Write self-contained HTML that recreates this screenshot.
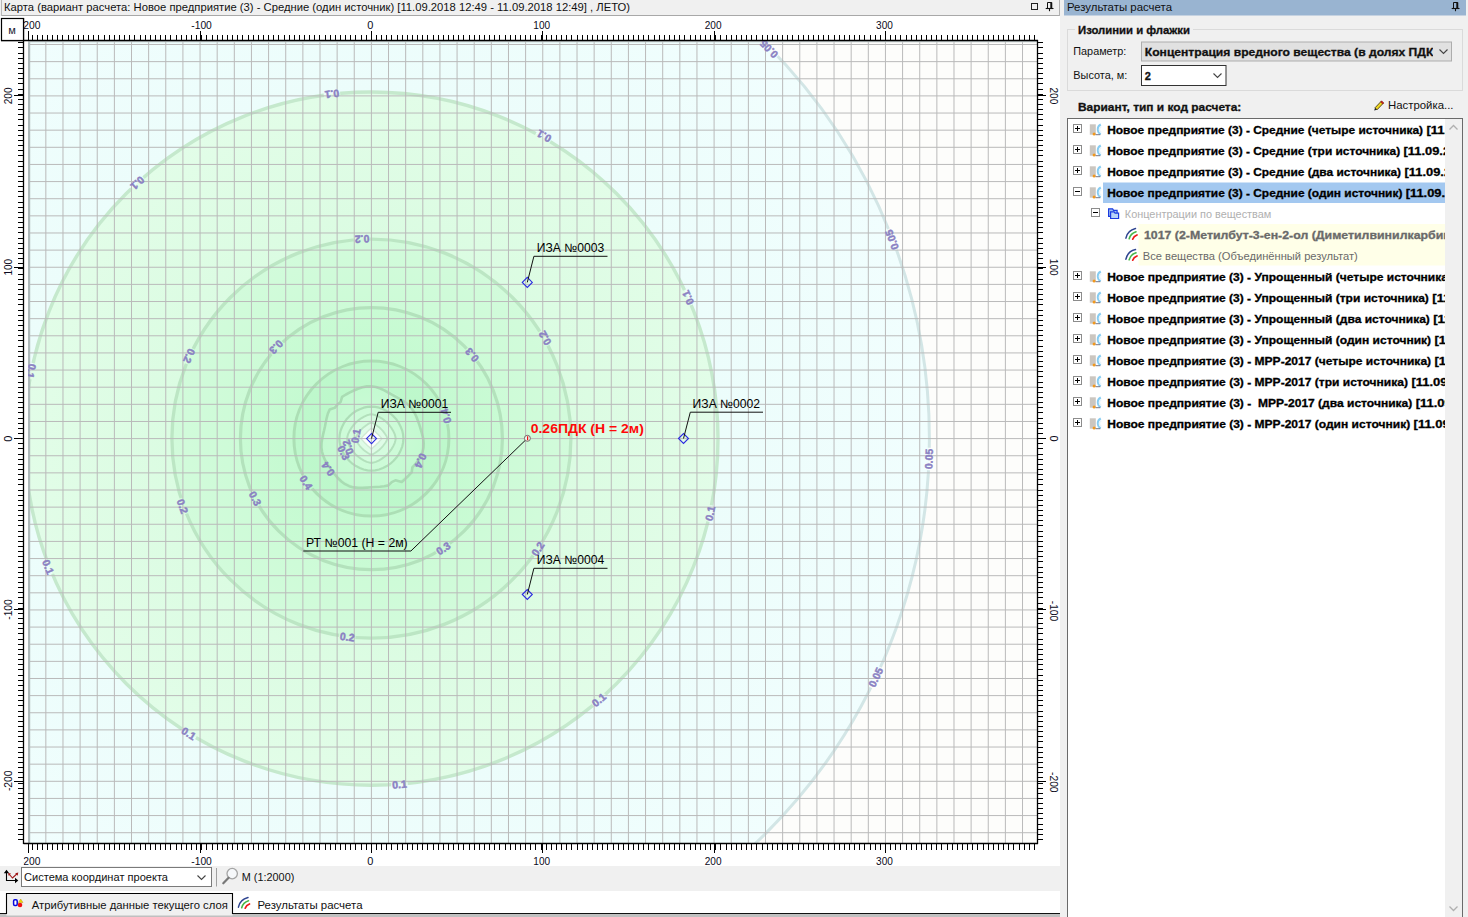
<!DOCTYPE html><html><head><meta charset="utf-8"><title>map</title><style>html,body{margin:0;padding:0;background:#f0f0f0;overflow:hidden}body{width:1468px;height:917px}</style></head><body><svg width="1468" height="917" viewBox="0 0 1468 917" font-family="Liberation Sans, sans-serif" font-size="11" style="display:block">
<defs>
<radialGradient id="g" gradientUnits="userSpaceOnUse" cx="371.4" cy="438.6" r="560"><stop offset="0.0000" stop-color="rgb(205,251,216)"/><stop offset="0.0571" stop-color="rgb(200,250,212)"/><stop offset="0.0893" stop-color="rgb(196,250,209)"/><stop offset="0.0911" stop-color="rgb(189,248,203)"/><stop offset="0.1393" stop-color="rgb(190,248,204)"/><stop offset="0.1393" stop-color="rgb(197,250,209)"/><stop offset="0.2339" stop-color="rgb(201,251,212)"/><stop offset="0.2339" stop-color="rgb(205,251,215)"/><stop offset="0.3563" stop-color="rgb(210,251,219)"/><stop offset="0.3563" stop-color="rgb(219,252,226)"/><stop offset="0.6189" stop-color="rgb(226,253,232)"/><stop offset="0.6189" stop-color="rgb(236,253,251)"/><stop offset="0.9964" stop-color="rgb(241,254,254)"/><stop offset="0.9964" stop-color="rgb(253,253,251)"/><stop offset="1.0000" stop-color="rgb(253,253,251)"/></radialGradient>
<clipPath id="mc"><rect x="28" y="41" width="1009.5" height="802.5"/></clipPath>
<clipPath id="tc"><rect x="1068" y="119" width="377" height="798"/></clipPath>
<clipPath id="cc"><rect x="1142" y="42" width="291" height="19"/></clipPath>
<clipPath id="rc"><rect x="23.5" y="17" width="1030" height="850"/></clipPath>
</defs>
<rect width="1468" height="917" fill="#f0f0f0"/>
<rect x="0" y="0" width="1060" height="16" fill="#f0f0f0"/>
<rect x="1" y="15" width="1058" height="1" fill="#a8a8a8"/>
<rect x="1" y="0" width="1" height="16" fill="#b8b8b8"/><rect x="1059" y="0" width="1" height="16" fill="#b0b0b0"/>
<text x="4" y="10.8" font-size="11" fill="#111" textLength="626" lengthAdjust="spacingAndGlyphs">Карта (вариант расчета: Новое предприятие (3) - Средние (один источник) [11.09.2018 12:49 - 11.09.2018 12:49] , ЛЕТО)</text>
<rect x="1031.5" y="3.5" width="6" height="6" fill="none" stroke="#222" stroke-width="1"/>
<g stroke="#111" fill="none"><path d="M1047.5 2.5H1051.7V8.5H1047.5Z" stroke-width="1"/><path d="M1051.2 2.5V8.5" stroke-width="1.8"/><path d="M1045.7 8.5H1053.5" stroke-width="1.1"/><path d="M1049.5 8.5V11.2" stroke-width="1.1"/></g>
<rect x="0" y="16" width="1060" height="850" fill="#fff"/>
<g clip-path="url(#mc)">
<rect x="28" y="41" width="1010" height="803" fill="#fdfdfb"/>
<circle cx="371.4" cy="438.6" r="560" fill="url(#g)"/>
<mask id="lm" maskUnits="userSpaceOnUse" x="0" y="0" width="1468" height="917"><rect x="0" y="0" width="1468" height="917" fill="#fff"/><rect x="39.8" y="562" width="16.5" height="10" fill="#000" transform="rotate(68.3 48 567)"/><rect x="180.4" y="728.6" width="16.5" height="10" fill="#000" transform="rotate(31.8 188.7 733.6)"/><rect x="391.2" y="779.5" width="16.5" height="10" fill="#000" transform="rotate(-4.6 399.5 784.5)"/><rect x="590.8" y="695" width="16.5" height="10" fill="#000" transform="rotate(-41.0 599 700)"/><rect x="702.0" y="508.5" width="16.5" height="10" fill="#000" transform="rotate(-77.5 710.3 513.5)"/><rect x="679.8" y="292.5" width="16.5" height="10" fill="#000" transform="rotate(-114.0 688 297.5)"/><rect x="535.8" y="131" width="16.5" height="10" fill="#000" transform="rotate(-150.3 544 136)"/><rect x="323.8" y="89" width="16.5" height="10" fill="#000" transform="rotate(-186.5 332 94)"/><rect x="129.2" y="178" width="16.5" height="10" fill="#000" transform="rotate(-222.5 137.4 183)"/><rect x="22.8" y="366" width="16.5" height="10" fill="#000" transform="rotate(-258.8 31 371)"/><rect x="174.1" y="501.4" width="16.5" height="10" fill="#000" transform="rotate(70.3 182.3 506.4)"/><rect x="338.9" y="632" width="16.5" height="10" fill="#000" transform="rotate(7.0 347.2 637)"/><rect x="529.8" y="544" width="16.5" height="10" fill="#000" transform="rotate(-56.5 538 549)"/><rect x="536.8" y="333" width="16.5" height="10" fill="#000" transform="rotate(-120.1 545 338)"/><rect x="353.8" y="234" width="16.5" height="10" fill="#000" transform="rotate(-182.7 362 239)"/><rect x="180.8" y="351" width="16.5" height="10" fill="#000" transform="rotate(-245.6 189 356)"/><rect x="246.8" y="493.6" width="16.5" height="10" fill="#000" transform="rotate(62.7 255 498.6)"/><rect x="435.1" y="543.6" width="16.5" height="10" fill="#000" transform="rotate(-33.2 443.4 548.6)"/><rect x="463.8" y="350" width="16.5" height="10" fill="#000" transform="rotate(-129.7 472 355)"/><rect x="267.8" y="342" width="16.5" height="10" fill="#000" transform="rotate(-226.2 276 347)"/><rect x="297.8" y="477.6" width="16.5" height="10" fill="#000" transform="rotate(56.1 306 482.6)"/><rect x="437.8" y="411" width="16.5" height="10" fill="#000" transform="rotate(-106.9 446 416)"/><rect x="917.8" y="454" width="22.5" height="10" fill="#000" transform="rotate(-87.9 929 459)"/><rect x="880.8" y="234.7" width="22.5" height="10" fill="#000" transform="rotate(-110.9 892 239.7)"/><rect x="864.5" y="672.3" width="22.5" height="10" fill="#000" transform="rotate(-64.7 875.8 677.3)"/><rect x="757.8" y="44" width="22.5" height="10" fill="#000" transform="rotate(-134.4 769 49)"/></mask>
<g mask="url(#lm)">
<circle cx="371.4" cy="438.6" r="558" fill="none" stroke="#d3e6e6" stroke-width="3"/>
<circle cx="371.4" cy="438.6" r="346.6" fill="none" stroke="#c5e9cd" stroke-width="3.4"/>
<circle cx="371.4" cy="438.6" r="199.5" fill="none" stroke="#bce6c4" stroke-width="3.3"/>
<circle cx="371.4" cy="438.6" r="131" fill="none" stroke="#b3e2bc" stroke-width="3.2"/>
<circle cx="371.4" cy="438.6" r="77.5" fill="none" stroke="#acdfb5" stroke-width="3.0"/>
</g>
<path d="M423.2 438.6 L423.7 443.2 L423.5 447.8 L422.5 452.3 L420.7 456.5 L418.3 460.4 L415.4 464.0 L412.4 467.3 L411.7 472.4 L408.5 475.7 L405.2 478.9 L401.7 481.9 L395.5 480.3 L391.7 482.2 L388.4 485.4 L384.2 486.2 L379.9 486.7 L375.6 487.0 L371.4 487.3 L367.1 487.6 L362.7 487.9 L358.2 487.9 L353.6 487.4 L349.2 486.2 L345.1 484.2 L341.4 481.5 L338.1 478.3 L335.2 474.8 L332.4 471.3 L329.9 467.7 L327.4 464.0 L325.1 460.2 L323.3 456.1 L322.0 451.8 L321.4 447.4 L321.5 443.0 L322.2 438.6 L323.1 434.4 L324.1 430.3 L325.0 426.2 L325.8 422.0 L326.7 417.8 L327.9 413.5 L329.7 409.4 L334.7 407.8 L337.4 404.6 L340.6 401.9 L342.1 396.8 L346.0 394.5 L349.9 392.4 L353.9 390.5 L358.0 388.7 L362.3 387.2 L366.8 386.4 L371.4 386.3 L375.9 387.0 L380.2 388.5 L384.3 390.4 L388.2 392.5 L391.9 394.6 L395.6 396.7 L399.3 398.7 L403.0 400.9 L406.6 403.4 L409.8 406.4 L412.6 409.8 L414.9 413.5 L416.7 417.5 L418.2 421.6 L419.6 425.7 L420.9 429.9 L422.1 434.2Z" fill="none" stroke="#a9dcb3" stroke-width="2.6" stroke-linejoin="round"/>
<path d="M403.4 438.6 L403.1 442.4 L402.3 446.3 L400.8 450.2 L398.9 454.0 L396.5 457.6 L393.6 460.8 L390.4 463.7 L386.8 466.1 L383.0 468.0 L379.1 469.5 L375.2 470.3 L371.4 470.6 L367.6 470.3 L363.7 469.5 L359.8 468.0 L356.0 466.1 L352.4 463.7 L349.2 460.8 L346.3 457.6 L343.9 454.0 L342.0 450.2 L340.5 446.3 L339.7 442.4 L339.4 438.6 L339.7 434.8 L340.5 430.9 L342.0 427.0 L343.9 423.2 L346.3 419.6 L349.2 416.4 L352.4 413.5 L356.0 411.1 L359.8 409.2 L363.7 407.7 L367.6 406.9 L371.4 406.6 L375.2 406.9 L379.1 407.7 L383.0 409.2 L386.8 411.1 L390.4 413.5 L393.6 416.4 L396.5 419.6 L398.9 423.2 L400.8 427.0 L402.3 430.9 L403.1 434.8Z" fill="rgb(205,251,216)" stroke="#addeb7" stroke-width="2.2" stroke-linejoin="round"/>
<path d="M395.7 438.6 L395.4 440.5 L394.7 443.1 L393.4 445.9 L391.7 448.8 L389.6 451.7 L387.2 454.4 L384.5 456.8 L381.6 458.9 L378.7 460.6 L375.9 461.9 L373.3 462.6 L371.4 462.9 L369.5 462.6 L366.9 461.9 L364.1 460.6 L361.2 458.9 L358.3 456.8 L355.6 454.4 L353.2 451.7 L351.1 448.8 L349.4 445.9 L348.1 443.1 L347.4 440.5 L347.1 438.6 L347.4 436.7 L348.1 434.1 L349.4 431.3 L351.1 428.4 L353.2 425.5 L355.6 422.8 L358.3 420.4 L361.2 418.3 L364.1 416.6 L366.9 415.3 L369.5 414.6 L371.4 414.3 L373.3 414.6 L375.9 415.3 L378.7 416.6 L381.6 418.3 L384.5 420.4 L387.2 422.8 L389.6 425.5 L391.7 428.4 L393.4 431.3 L394.7 434.1 L395.4 436.7Z" fill="rgb(212,252,222)" stroke="#b3e0bc" stroke-width="2.0" stroke-linejoin="round"/>
<path d="M387.4 438.6 L387.2 439.4 L386.6 440.8 L385.6 442.5 L384.3 444.3 L382.8 446.3 L381.0 448.2 L379.1 450.0 L377.1 451.5 L375.3 452.8 L373.6 453.8 L372.2 454.4 L371.4 454.6 L370.6 454.4 L369.2 453.8 L367.5 452.8 L365.7 451.5 L363.7 450.0 L361.8 448.2 L360.0 446.3 L358.5 444.3 L357.2 442.5 L356.2 440.8 L355.6 439.4 L355.4 438.6 L355.6 437.8 L356.2 436.4 L357.2 434.7 L358.5 432.9 L360.0 430.9 L361.8 429.0 L363.7 427.2 L365.7 425.7 L367.5 424.4 L369.2 423.4 L370.6 422.8 L371.4 422.6 L372.2 422.8 L373.6 423.4 L375.3 424.4 L377.1 425.7 L379.1 427.2 L381.0 429.0 L382.8 430.9 L384.3 432.9 L385.6 434.7 L386.6 436.4 L387.2 437.8Z" fill="rgb(223,252,231)" stroke="#bbe3c3" stroke-width="1.8" stroke-linejoin="round"/>
<path d="M381.9 438.6 L381.7 438.8 L381.2 439.4 L380.4 440.3 L379.4 441.4 L378.2 442.7 L376.8 444.0 L375.5 445.4 L374.2 446.6 L373.1 447.6 L372.2 448.4 L371.6 448.9 L371.4 449.1 L371.2 448.9 L370.6 448.4 L369.7 447.6 L368.6 446.6 L367.3 445.4 L366.0 444.0 L364.6 442.7 L363.4 441.4 L362.4 440.3 L361.6 439.4 L361.1 438.8 L360.9 438.6 L361.1 438.4 L361.6 437.8 L362.4 436.9 L363.4 435.8 L364.6 434.5 L366.0 433.2 L367.3 431.8 L368.6 430.6 L369.7 429.6 L370.6 428.8 L371.2 428.3 L371.4 428.1 L371.6 428.3 L372.2 428.8 L373.1 429.6 L374.2 430.6 L375.5 431.8 L376.8 433.2 L378.2 434.5 L379.4 435.8 L380.4 436.9 L381.2 437.8 L381.7 438.4Z" fill="rgb(250,254,251)" stroke="#cfe9d4" stroke-width="1.4" stroke-linejoin="round"/>
<path d="M45.83 41V844M62.97 41V844M80.10 41V844M97.24 41V844M114.38 41V844M131.51 41V844M148.64 41V844M165.78 41V844M182.91 41V844M200.05 41V844M217.18 41V844M234.32 41V844M251.45 41V844M268.59 41V844M285.72 41V844M302.86 41V844M320.00 41V844M337.13 41V844M354.26 41V844M371.40 41V844M388.53 41V844M405.67 41V844M422.80 41V844M439.94 41V844M457.07 41V844M474.21 41V844M491.34 41V844M508.48 41V844M525.62 41V844M542.75 41V844M559.88 41V844M577.02 41V844M594.15 41V844M611.29 41V844M628.42 41V844M645.56 41V844M662.69 41V844M679.83 41V844M696.96 41V844M714.10 41V844M731.23 41V844M748.37 41V844M765.50 41V844M782.64 41V844M799.77 41V844M816.91 41V844M834.04 41V844M851.18 41V844M868.32 41V844M885.45 41V844M902.59 41V844M919.72 41V844M936.86 41V844M953.99 41V844M971.12 41V844M988.26 41V844M1005.39 41V844M1022.53 41V844M28 832.71H1038M28 815.57H1038M28 798.43H1038M28 781.30H1038M28 764.16H1038M28 747.03H1038M28 729.89H1038M28 712.76H1038M28 695.62H1038M28 678.49H1038M28 661.36H1038M28 644.22H1038M28 627.09H1038M28 609.95H1038M28 592.82H1038M28 575.68H1038M28 558.55H1038M28 541.41H1038M28 524.27H1038M28 507.14H1038M28 490.00H1038M28 472.87H1038M28 455.74H1038M28 438.60H1038M28 421.47H1038M28 404.33H1038M28 387.20H1038M28 370.06H1038M28 352.93H1038M28 335.79H1038M28 318.66H1038M28 301.52H1038M28 284.38H1038M28 267.25H1038M28 250.12H1038M28 232.98H1038M28 215.85H1038M28 198.71H1038M28 181.58H1038M28 164.44H1038M28 147.31H1038M28 130.17H1038M28 113.04H1038M28 95.90H1038M28 78.77H1038M28 61.63H1038M28 44.50H1038" stroke="#bababa" stroke-width="1" fill="none"/>
<rect x="28" y="41" width="2.2" height="803" fill="#aeb9ba"/>
<rect x="28" y="41" width="1010" height="1.3" fill="#c6cfcf"/>
<text x="48" y="570.6" font-size="10.5" font-weight="bold" fill="#8a81c3" stroke="#8a81c3" stroke-width="0.45" text-anchor="middle" transform="rotate(68.3 48 567)">0.1</text>
<text x="188.7" y="737.2" font-size="10.5" font-weight="bold" fill="#8a81c3" stroke="#8a81c3" stroke-width="0.45" text-anchor="middle" transform="rotate(31.8 188.7 733.6)">0.1</text>
<text x="399.5" y="788.1" font-size="10.5" font-weight="bold" fill="#8a81c3" stroke="#8a81c3" stroke-width="0.45" text-anchor="middle" transform="rotate(-4.6 399.5 784.5)">0.1</text>
<text x="599" y="703.6" font-size="10.5" font-weight="bold" fill="#8a81c3" stroke="#8a81c3" stroke-width="0.45" text-anchor="middle" transform="rotate(-41.0 599 700)">0.1</text>
<text x="710.3" y="517.1" font-size="10.5" font-weight="bold" fill="#8a81c3" stroke="#8a81c3" stroke-width="0.45" text-anchor="middle" transform="rotate(-77.5 710.3 513.5)">0.1</text>
<text x="688" y="301.1" font-size="10.5" font-weight="bold" fill="#8a81c3" stroke="#8a81c3" stroke-width="0.45" text-anchor="middle" transform="rotate(-114.0 688 297.5)">0.1</text>
<text x="544" y="139.6" font-size="10.5" font-weight="bold" fill="#8a81c3" stroke="#8a81c3" stroke-width="0.45" text-anchor="middle" transform="rotate(-150.3 544 136)">0.1</text>
<text x="332" y="97.6" font-size="10.5" font-weight="bold" fill="#8a81c3" stroke="#8a81c3" stroke-width="0.45" text-anchor="middle" transform="rotate(-186.5 332 94)">0.1</text>
<text x="137.4" y="186.6" font-size="10.5" font-weight="bold" fill="#8a81c3" stroke="#8a81c3" stroke-width="0.45" text-anchor="middle" transform="rotate(-222.5 137.4 183)">0.1</text>
<text x="31" y="374.6" font-size="10.5" font-weight="bold" fill="#8a81c3" stroke="#8a81c3" stroke-width="0.45" text-anchor="middle" transform="rotate(-258.8 31 371)">0.1</text>
<text x="182.3" y="510.0" font-size="10.5" font-weight="bold" fill="#8a81c3" stroke="#8a81c3" stroke-width="0.45" text-anchor="middle" transform="rotate(70.3 182.3 506.4)">0.2</text>
<text x="347.2" y="640.6" font-size="10.5" font-weight="bold" fill="#8a81c3" stroke="#8a81c3" stroke-width="0.45" text-anchor="middle" transform="rotate(7.0 347.2 637)">0.2</text>
<text x="538" y="552.6" font-size="10.5" font-weight="bold" fill="#8a81c3" stroke="#8a81c3" stroke-width="0.45" text-anchor="middle" transform="rotate(-56.5 538 549)">0.2</text>
<text x="545" y="341.6" font-size="10.5" font-weight="bold" fill="#8a81c3" stroke="#8a81c3" stroke-width="0.45" text-anchor="middle" transform="rotate(-120.1 545 338)">0.2</text>
<text x="362" y="242.6" font-size="10.5" font-weight="bold" fill="#8a81c3" stroke="#8a81c3" stroke-width="0.45" text-anchor="middle" transform="rotate(-182.7 362 239)">0.2</text>
<text x="189" y="359.6" font-size="10.5" font-weight="bold" fill="#8a81c3" stroke="#8a81c3" stroke-width="0.45" text-anchor="middle" transform="rotate(-245.6 189 356)">0.2</text>
<text x="255" y="502.20000000000005" font-size="10.5" font-weight="bold" fill="#8a81c3" stroke="#8a81c3" stroke-width="0.45" text-anchor="middle" transform="rotate(62.7 255 498.6)">0.3</text>
<text x="443.4" y="552.2" font-size="10.5" font-weight="bold" fill="#8a81c3" stroke="#8a81c3" stroke-width="0.45" text-anchor="middle" transform="rotate(-33.2 443.4 548.6)">0.3</text>
<text x="472" y="358.6" font-size="10.5" font-weight="bold" fill="#8a81c3" stroke="#8a81c3" stroke-width="0.45" text-anchor="middle" transform="rotate(-129.7 472 355)">0.3</text>
<text x="276" y="350.6" font-size="10.5" font-weight="bold" fill="#8a81c3" stroke="#8a81c3" stroke-width="0.45" text-anchor="middle" transform="rotate(-226.2 276 347)">0.3</text>
<text x="306" y="486.20000000000005" font-size="10.5" font-weight="bold" fill="#8a81c3" stroke="#8a81c3" stroke-width="0.45" text-anchor="middle" transform="rotate(56.1 306 482.6)">0.4</text>
<text x="446" y="419.6" font-size="10.5" font-weight="bold" fill="#8a81c3" stroke="#8a81c3" stroke-width="0.45" text-anchor="middle" transform="rotate(-106.9 446 416)">0.4</text>
<text x="929" y="462.6" font-size="10.5" font-weight="bold" fill="#8a81c3" stroke="#8a81c3" stroke-width="0.45" text-anchor="middle" transform="rotate(-87.9 929 459)">0.05</text>
<text x="892" y="243.29999999999998" font-size="10.5" font-weight="bold" fill="#8a81c3" stroke="#8a81c3" stroke-width="0.45" text-anchor="middle" transform="rotate(-110.9 892 239.7)">0.05</text>
<text x="875.8" y="680.9" font-size="10.5" font-weight="bold" fill="#8a81c3" stroke="#8a81c3" stroke-width="0.45" text-anchor="middle" transform="rotate(-64.7 875.8 677.3)">0.05</text>
<text x="769" y="52.6" font-size="10.5" font-weight="bold" fill="#8a81c3" stroke="#8a81c3" stroke-width="0.45" text-anchor="middle" transform="rotate(-134.4 769 49)">0.05</text>
<text x="328" y="472.5" font-size="10.5" font-weight="bold" fill="#8a81c3" stroke="#8a81c3" stroke-width="0.45" text-anchor="middle" transform="rotate(235.1 328 468.9)">0.4</text>
<text x="420.5" y="464.20000000000005" font-size="10.5" font-weight="bold" fill="#8a81c3" stroke="#8a81c3" stroke-width="0.45" text-anchor="middle" transform="rotate(114.1 420.5 460.6)">0.4</text>
<text x="343.6" y="456.40000000000003" font-size="10.5" font-weight="bold" fill="#8a81c3" stroke="#8a81c3" stroke-width="0.45" text-anchor="middle" transform="rotate(62.9 343.6 452.8)">0.3</text>
<text x="348" y="450.6" font-size="10.5" font-weight="bold" fill="#8a81c3" stroke="#8a81c3" stroke-width="0.45" text-anchor="middle" transform="rotate(250.3 348 447)">0.2</text>
<text x="356" y="439.6" font-size="10.5" font-weight="bold" fill="#8a81c3" stroke="#8a81c3" stroke-width="0.45" text-anchor="middle" transform="rotate(-80.4 356 436)">0.1</text>
</g>
<path d="M366.5 438.6L371.5 433.6L376.5 438.6L371.5 443.6Z" fill="none" stroke="#2a2ae0" stroke-width="1.1"/>
<path d="M371.5 438.6L378.2 412.3H451" fill="none" stroke="#111" stroke-width="1"/>
<text x="380.7" y="407.7" font-size="12" fill="#000" textLength="67.5" lengthAdjust="spacingAndGlyphs">ИЗА №0001</text>
<path d="M522.3 282.4L527.3 277.4L532.3 282.4L527.3 287.4Z" fill="none" stroke="#2a2ae0" stroke-width="1.1"/>
<path d="M527.3 282.4L533.9 256.3H607.5" fill="none" stroke="#111" stroke-width="1"/>
<text x="536.7" y="251.70000000000002" font-size="12" fill="#000" textLength="67.5" lengthAdjust="spacingAndGlyphs">ИЗА №0003</text>
<path d="M678.5 438.5L683.5 433.5L688.5 438.5L683.5 443.5Z" fill="none" stroke="#2a2ae0" stroke-width="1.1"/>
<path d="M683.5 438.5L690.3 412.2H763" fill="none" stroke="#111" stroke-width="1"/>
<text x="692.6" y="407.59999999999997" font-size="12" fill="#000" textLength="67.5" lengthAdjust="spacingAndGlyphs">ИЗА №0002</text>
<path d="M522.3 594.5L527.3 589.5L532.3 594.5L527.3 599.5Z" fill="none" stroke="#2a2ae0" stroke-width="1.1"/>
<path d="M527.3 594.5L533.9 568.3H607.5" fill="none" stroke="#111" stroke-width="1"/>
<text x="536.7" y="563.6999999999999" font-size="12" fill="#000" textLength="67.5" lengthAdjust="spacingAndGlyphs">ИЗА №0004</text>
<path d="M303.3 551H410.9L527.3 438.4" fill="none" stroke="#111" stroke-width="1"/>
<circle cx="527.4" cy="438.3" r="3" fill="#eef6ee" stroke="#6a5a5a" stroke-width="0.9"/><path d="M527.6 436.3V440.3" stroke="#f01010" stroke-width="1.2"/>
<text x="306" y="547.4" font-size="12" fill="#000" textLength="101.7" lengthAdjust="spacingAndGlyphs">РТ №001 (H = 2м)</text>
<text x="530.7" y="432.6" font-size="13.5" font-weight="bold" fill="#ff0808" textLength="113.2" lengthAdjust="spacingAndGlyphs">0.26ПДК (H = 2м)</text>
<path d="M32.5 35V40.5M32.5 843.5V849.5M37.5 35V40.5M37.5 843.5V849.5M42.5 35V40.5M42.5 843.5V849.5M47.5 35V40.5M47.5 843.5V849.5M52.5 35V40.5M52.5 843.5V849.5M57.5 35V40.5M57.5 843.5V849.5M62.5 35V40.5M62.5 843.5V849.5M68.5 35V40.5M68.5 843.5V849.5M73.5 35V40.5M73.5 843.5V849.5M78.5 35V40.5M78.5 843.5V849.5M83.5 35V40.5M83.5 843.5V849.5M88.5 35V40.5M88.5 843.5V849.5M93.5 35V40.5M93.5 843.5V849.5M98.5 35V40.5M98.5 843.5V849.5M104.5 35V40.5M104.5 843.5V849.5M109.5 35V40.5M109.5 843.5V849.5M114.5 35V40.5M114.5 843.5V849.5M119.5 35V40.5M119.5 843.5V849.5M124.5 35V40.5M124.5 843.5V849.5M129.5 35V40.5M129.5 843.5V849.5M134.5 35V40.5M134.5 843.5V849.5M140.5 35V40.5M140.5 843.5V849.5M145.5 35V40.5M145.5 843.5V849.5M150.5 35V40.5M150.5 843.5V849.5M155.5 35V40.5M155.5 843.5V849.5M160.5 35V40.5M160.5 843.5V849.5M165.5 35V40.5M165.5 843.5V849.5M170.5 35V40.5M170.5 843.5V849.5M176.5 35V40.5M176.5 843.5V849.5M181.5 35V40.5M181.5 843.5V849.5M186.5 35V40.5M186.5 843.5V849.5M191.5 35V40.5M191.5 843.5V849.5M196.5 35V40.5M196.5 843.5V849.5M201.5 35V40.5M201.5 843.5V849.5M206.5 35V40.5M206.5 843.5V849.5M212.5 35V40.5M212.5 843.5V849.5M217.5 35V40.5M217.5 843.5V849.5M222.5 35V40.5M222.5 843.5V849.5M227.5 35V40.5M227.5 843.5V849.5M232.5 35V40.5M232.5 843.5V849.5M237.5 35V40.5M237.5 843.5V849.5M242.5 35V40.5M242.5 843.5V849.5M248.5 35V40.5M248.5 843.5V849.5M253.5 35V40.5M253.5 843.5V849.5M258.5 35V40.5M258.5 843.5V849.5M263.5 35V40.5M263.5 843.5V849.5M268.5 35V40.5M268.5 843.5V849.5M273.5 35V40.5M273.5 843.5V849.5M278.5 35V40.5M278.5 843.5V849.5M284.5 35V40.5M284.5 843.5V849.5M289.5 35V40.5M289.5 843.5V849.5M294.5 35V40.5M294.5 843.5V849.5M299.5 35V40.5M299.5 843.5V849.5M304.5 35V40.5M304.5 843.5V849.5M309.5 35V40.5M309.5 843.5V849.5M314.5 35V40.5M314.5 843.5V849.5M319.5 35V40.5M319.5 843.5V849.5M325.5 35V40.5M325.5 843.5V849.5M330.5 35V40.5M330.5 843.5V849.5M335.5 35V40.5M335.5 843.5V849.5M340.5 35V40.5M340.5 843.5V849.5M345.5 35V40.5M345.5 843.5V849.5M350.5 35V40.5M350.5 843.5V849.5M355.5 35V40.5M355.5 843.5V849.5M361.5 35V40.5M361.5 843.5V849.5M366.5 35V40.5M366.5 843.5V849.5M371.5 35V40.5M371.5 843.5V849.5M376.5 35V40.5M376.5 843.5V849.5M381.5 35V40.5M381.5 843.5V849.5M386.5 35V40.5M386.5 843.5V849.5M391.5 35V40.5M391.5 843.5V849.5M397.5 35V40.5M397.5 843.5V849.5M402.5 35V40.5M402.5 843.5V849.5M407.5 35V40.5M407.5 843.5V849.5M412.5 35V40.5M412.5 843.5V849.5M417.5 35V40.5M417.5 843.5V849.5M422.5 35V40.5M422.5 843.5V849.5M427.5 35V40.5M427.5 843.5V849.5M433.5 35V40.5M433.5 843.5V849.5M438.5 35V40.5M438.5 843.5V849.5M443.5 35V40.5M443.5 843.5V849.5M448.5 35V40.5M448.5 843.5V849.5M453.5 35V40.5M453.5 843.5V849.5M458.5 35V40.5M458.5 843.5V849.5M463.5 35V40.5M463.5 843.5V849.5M469.5 35V40.5M469.5 843.5V849.5M474.5 35V40.5M474.5 843.5V849.5M479.5 35V40.5M479.5 843.5V849.5M484.5 35V40.5M484.5 843.5V849.5M489.5 35V40.5M489.5 843.5V849.5M494.5 35V40.5M494.5 843.5V849.5M499.5 35V40.5M499.5 843.5V849.5M505.5 35V40.5M505.5 843.5V849.5M510.5 35V40.5M510.5 843.5V849.5M515.5 35V40.5M515.5 843.5V849.5M520.5 35V40.5M520.5 843.5V849.5M525.5 35V40.5M525.5 843.5V849.5M530.5 35V40.5M530.5 843.5V849.5M535.5 35V40.5M535.5 843.5V849.5M541.5 35V40.5M541.5 843.5V849.5M546.5 35V40.5M546.5 843.5V849.5M551.5 35V40.5M551.5 843.5V849.5M556.5 35V40.5M556.5 843.5V849.5M561.5 35V40.5M561.5 843.5V849.5M566.5 35V40.5M566.5 843.5V849.5M571.5 35V40.5M571.5 843.5V849.5M577.5 35V40.5M577.5 843.5V849.5M582.5 35V40.5M582.5 843.5V849.5M587.5 35V40.5M587.5 843.5V849.5M592.5 35V40.5M592.5 843.5V849.5M597.5 35V40.5M597.5 843.5V849.5M602.5 35V40.5M602.5 843.5V849.5M607.5 35V40.5M607.5 843.5V849.5M613.5 35V40.5M613.5 843.5V849.5M618.5 35V40.5M618.5 843.5V849.5M623.5 35V40.5M623.5 843.5V849.5M628.5 35V40.5M628.5 843.5V849.5M633.5 35V40.5M633.5 843.5V849.5M638.5 35V40.5M638.5 843.5V849.5M643.5 35V40.5M643.5 843.5V849.5M648.5 35V40.5M648.5 843.5V849.5M654.5 35V40.5M654.5 843.5V849.5M659.5 35V40.5M659.5 843.5V849.5M664.5 35V40.5M664.5 843.5V849.5M669.5 35V40.5M669.5 843.5V849.5M674.5 35V40.5M674.5 843.5V849.5M679.5 35V40.5M679.5 843.5V849.5M684.5 35V40.5M684.5 843.5V849.5M690.5 35V40.5M690.5 843.5V849.5M695.5 35V40.5M695.5 843.5V849.5M700.5 35V40.5M700.5 843.5V849.5M705.5 35V40.5M705.5 843.5V849.5M710.5 35V40.5M710.5 843.5V849.5M715.5 35V40.5M715.5 843.5V849.5M720.5 35V40.5M720.5 843.5V849.5M726.5 35V40.5M726.5 843.5V849.5M731.5 35V40.5M731.5 843.5V849.5M736.5 35V40.5M736.5 843.5V849.5M741.5 35V40.5M741.5 843.5V849.5M746.5 35V40.5M746.5 843.5V849.5M751.5 35V40.5M751.5 843.5V849.5M756.5 35V40.5M756.5 843.5V849.5M762.5 35V40.5M762.5 843.5V849.5M767.5 35V40.5M767.5 843.5V849.5M772.5 35V40.5M772.5 843.5V849.5M777.5 35V40.5M777.5 843.5V849.5M782.5 35V40.5M782.5 843.5V849.5M787.5 35V40.5M787.5 843.5V849.5M792.5 35V40.5M792.5 843.5V849.5M798.5 35V40.5M798.5 843.5V849.5M803.5 35V40.5M803.5 843.5V849.5M808.5 35V40.5M808.5 843.5V849.5M813.5 35V40.5M813.5 843.5V849.5M818.5 35V40.5M818.5 843.5V849.5M823.5 35V40.5M823.5 843.5V849.5M828.5 35V40.5M828.5 843.5V849.5M834.5 35V40.5M834.5 843.5V849.5M839.5 35V40.5M839.5 843.5V849.5M844.5 35V40.5M844.5 843.5V849.5M849.5 35V40.5M849.5 843.5V849.5M854.5 35V40.5M854.5 843.5V849.5M859.5 35V40.5M859.5 843.5V849.5M864.5 35V40.5M864.5 843.5V849.5M870.5 35V40.5M870.5 843.5V849.5M875.5 35V40.5M875.5 843.5V849.5M880.5 35V40.5M880.5 843.5V849.5M885.5 35V40.5M885.5 843.5V849.5M890.5 35V40.5M890.5 843.5V849.5M895.5 35V40.5M895.5 843.5V849.5M900.5 35V40.5M900.5 843.5V849.5M906.5 35V40.5M906.5 843.5V849.5M911.5 35V40.5M911.5 843.5V849.5M916.5 35V40.5M916.5 843.5V849.5M921.5 35V40.5M921.5 843.5V849.5M926.5 35V40.5M926.5 843.5V849.5M931.5 35V40.5M931.5 843.5V849.5M936.5 35V40.5M936.5 843.5V849.5M941.5 35V40.5M941.5 843.5V849.5M947.5 35V40.5M947.5 843.5V849.5M952.5 35V40.5M952.5 843.5V849.5M957.5 35V40.5M957.5 843.5V849.5M962.5 35V40.5M962.5 843.5V849.5M967.5 35V40.5M967.5 843.5V849.5M972.5 35V40.5M972.5 843.5V849.5M977.5 35V40.5M977.5 843.5V849.5M983.5 35V40.5M983.5 843.5V849.5M988.5 35V40.5M988.5 843.5V849.5M993.5 35V40.5M993.5 843.5V849.5M998.5 35V40.5M998.5 843.5V849.5M1003.5 35V40.5M1003.5 843.5V849.5M1008.5 35V40.5M1008.5 843.5V849.5M1013.5 35V40.5M1013.5 843.5V849.5M1019.5 35V40.5M1019.5 843.5V849.5M1024.5 35V40.5M1024.5 843.5V849.5M1029.5 35V40.5M1029.5 843.5V849.5M1034.5 35V40.5M1034.5 843.5V849.5M18 42.5H23.5M1037.5 42.5H1043M18 47.5H23.5M1037.5 47.5H1043M18 53.5H23.5M1037.5 53.5H1043M18 58.5H23.5M1037.5 58.5H1043M18 63.5H23.5M1037.5 63.5H1043M18 68.5H23.5M1037.5 68.5H1043M18 73.5H23.5M1037.5 73.5H1043M18 78.5H23.5M1037.5 78.5H1043M18 83.5H23.5M1037.5 83.5H1043M18 89.5H23.5M1037.5 89.5H1043M18 94.5H23.5M1037.5 94.5H1043M18 99.5H23.5M1037.5 99.5H1043M18 104.5H23.5M1037.5 104.5H1043M18 109.5H23.5M1037.5 109.5H1043M18 114.5H23.5M1037.5 114.5H1043M18 119.5H23.5M1037.5 119.5H1043M18 125.5H23.5M1037.5 125.5H1043M18 130.5H23.5M1037.5 130.5H1043M18 135.5H23.5M1037.5 135.5H1043M18 140.5H23.5M1037.5 140.5H1043M18 145.5H23.5M1037.5 145.5H1043M18 150.5H23.5M1037.5 150.5H1043M18 155.5H23.5M1037.5 155.5H1043M18 161.5H23.5M1037.5 161.5H1043M18 166.5H23.5M1037.5 166.5H1043M18 171.5H23.5M1037.5 171.5H1043M18 176.5H23.5M1037.5 176.5H1043M18 181.5H23.5M1037.5 181.5H1043M18 186.5H23.5M1037.5 186.5H1043M18 191.5H23.5M1037.5 191.5H1043M18 196.5H23.5M1037.5 196.5H1043M18 202.5H23.5M1037.5 202.5H1043M18 207.5H23.5M1037.5 207.5H1043M18 212.5H23.5M1037.5 212.5H1043M18 217.5H23.5M1037.5 217.5H1043M18 222.5H23.5M1037.5 222.5H1043M18 227.5H23.5M1037.5 227.5H1043M18 232.5H23.5M1037.5 232.5H1043M18 238.5H23.5M1037.5 238.5H1043M18 243.5H23.5M1037.5 243.5H1043M18 248.5H23.5M1037.5 248.5H1043M18 253.5H23.5M1037.5 253.5H1043M18 258.5H23.5M1037.5 258.5H1043M18 263.5H23.5M1037.5 263.5H1043M18 268.5H23.5M1037.5 268.5H1043M18 274.5H23.5M1037.5 274.5H1043M18 279.5H23.5M1037.5 279.5H1043M18 284.5H23.5M1037.5 284.5H1043M18 289.5H23.5M1037.5 289.5H1043M18 294.5H23.5M1037.5 294.5H1043M18 299.5H23.5M1037.5 299.5H1043M18 304.5H23.5M1037.5 304.5H1043M18 310.5H23.5M1037.5 310.5H1043M18 315.5H23.5M1037.5 315.5H1043M18 320.5H23.5M1037.5 320.5H1043M18 325.5H23.5M1037.5 325.5H1043M18 330.5H23.5M1037.5 330.5H1043M18 335.5H23.5M1037.5 335.5H1043M18 340.5H23.5M1037.5 340.5H1043M18 346.5H23.5M1037.5 346.5H1043M18 351.5H23.5M1037.5 351.5H1043M18 356.5H23.5M1037.5 356.5H1043M18 361.5H23.5M1037.5 361.5H1043M18 366.5H23.5M1037.5 366.5H1043M18 371.5H23.5M1037.5 371.5H1043M18 376.5H23.5M1037.5 376.5H1043M18 382.5H23.5M1037.5 382.5H1043M18 387.5H23.5M1037.5 387.5H1043M18 392.5H23.5M1037.5 392.5H1043M18 397.5H23.5M1037.5 397.5H1043M18 402.5H23.5M1037.5 402.5H1043M18 407.5H23.5M1037.5 407.5H1043M18 412.5H23.5M1037.5 412.5H1043M18 418.5H23.5M1037.5 418.5H1043M18 423.5H23.5M1037.5 423.5H1043M18 428.5H23.5M1037.5 428.5H1043M18 433.5H23.5M1037.5 433.5H1043M18 438.5H23.5M1037.5 438.5H1043M18 443.5H23.5M1037.5 443.5H1043M18 448.5H23.5M1037.5 448.5H1043M18 454.5H23.5M1037.5 454.5H1043M18 459.5H23.5M1037.5 459.5H1043M18 464.5H23.5M1037.5 464.5H1043M18 469.5H23.5M1037.5 469.5H1043M18 474.5H23.5M1037.5 474.5H1043M18 479.5H23.5M1037.5 479.5H1043M18 484.5H23.5M1037.5 484.5H1043M18 490.5H23.5M1037.5 490.5H1043M18 495.5H23.5M1037.5 495.5H1043M18 500.5H23.5M1037.5 500.5H1043M18 505.5H23.5M1037.5 505.5H1043M18 510.5H23.5M1037.5 510.5H1043M18 515.5H23.5M1037.5 515.5H1043M18 520.5H23.5M1037.5 520.5H1043M18 525.5H23.5M1037.5 525.5H1043M18 531.5H23.5M1037.5 531.5H1043M18 536.5H23.5M1037.5 536.5H1043M18 541.5H23.5M1037.5 541.5H1043M18 546.5H23.5M1037.5 546.5H1043M18 551.5H23.5M1037.5 551.5H1043M18 556.5H23.5M1037.5 556.5H1043M18 561.5H23.5M1037.5 561.5H1043M18 567.5H23.5M1037.5 567.5H1043M18 572.5H23.5M1037.5 572.5H1043M18 577.5H23.5M1037.5 577.5H1043M18 582.5H23.5M1037.5 582.5H1043M18 587.5H23.5M1037.5 587.5H1043M18 592.5H23.5M1037.5 592.5H1043M18 597.5H23.5M1037.5 597.5H1043M18 603.5H23.5M1037.5 603.5H1043M18 608.5H23.5M1037.5 608.5H1043M18 613.5H23.5M1037.5 613.5H1043M18 618.5H23.5M1037.5 618.5H1043M18 623.5H23.5M1037.5 623.5H1043M18 628.5H23.5M1037.5 628.5H1043M18 633.5H23.5M1037.5 633.5H1043M18 639.5H23.5M1037.5 639.5H1043M18 644.5H23.5M1037.5 644.5H1043M18 649.5H23.5M1037.5 649.5H1043M18 654.5H23.5M1037.5 654.5H1043M18 659.5H23.5M1037.5 659.5H1043M18 664.5H23.5M1037.5 664.5H1043M18 669.5H23.5M1037.5 669.5H1043M18 675.5H23.5M1037.5 675.5H1043M18 680.5H23.5M1037.5 680.5H1043M18 685.5H23.5M1037.5 685.5H1043M18 690.5H23.5M1037.5 690.5H1043M18 695.5H23.5M1037.5 695.5H1043M18 700.5H23.5M1037.5 700.5H1043M18 705.5H23.5M1037.5 705.5H1043M18 711.5H23.5M1037.5 711.5H1043M18 716.5H23.5M1037.5 716.5H1043M18 721.5H23.5M1037.5 721.5H1043M18 726.5H23.5M1037.5 726.5H1043M18 731.5H23.5M1037.5 731.5H1043M18 736.5H23.5M1037.5 736.5H1043M18 741.5H23.5M1037.5 741.5H1043M18 747.5H23.5M1037.5 747.5H1043M18 752.5H23.5M1037.5 752.5H1043M18 757.5H23.5M1037.5 757.5H1043M18 762.5H23.5M1037.5 762.5H1043M18 767.5H23.5M1037.5 767.5H1043M18 772.5H23.5M1037.5 772.5H1043M18 777.5H23.5M1037.5 777.5H1043M18 783.5H23.5M1037.5 783.5H1043M18 788.5H23.5M1037.5 788.5H1043M18 793.5H23.5M1037.5 793.5H1043M18 798.5H23.5M1037.5 798.5H1043M18 803.5H23.5M1037.5 803.5H1043M18 808.5H23.5M1037.5 808.5H1043M18 813.5H23.5M1037.5 813.5H1043M18 818.5H23.5M1037.5 818.5H1043M18 824.5H23.5M1037.5 824.5H1043M18 829.5H23.5M1037.5 829.5H1043M18 834.5H23.5M1037.5 834.5H1043M18 839.5H23.5M1037.5 839.5H1043M28.5 31V40.5M28.5 843.5V852.5M200.5 31V40.5M200.5 843.5V852.5M371.5 31V40.5M371.5 843.5V852.5M542.5 31V40.5M542.5 843.5V852.5M714.5 31V40.5M714.5 843.5V852.5M885.5 31V40.5M885.5 843.5V852.5M14 781.5H23.5M1037.5 781.5H1046M14 609.5H23.5M1037.5 609.5H1046M14 438.5H23.5M1037.5 438.5H1046M14 267.5H23.5M1037.5 267.5H1046M14 95.5H23.5M1037.5 95.5H1046" stroke="#000" stroke-width="1" fill="none" shape-rendering="crispEdges"/>
<path d="M1 40.5H1038 M23.5 18V844 M23.5 843.5H1038 M1037.5 40V844" stroke="#000" stroke-width="1.3" fill="none"/>
<rect x="1.5" y="18.5" width="22" height="22" fill="#fff" stroke="#000" stroke-width="1.2"/>
<text x="12" y="33.5" font-size="11" fill="#223" text-anchor="middle">м</text>
<g fill="#0a0a20">
<g clip-path="url(#rc)">
<text x="30.19999999999999" y="29" font-size="11" fill="#0a0a20" text-anchor="middle" textLength="20.6" lengthAdjust="spacingAndGlyphs">-200</text>
<text x="30.19999999999999" y="864.5" font-size="11" fill="#0a0a20" text-anchor="middle" textLength="20.6" lengthAdjust="spacingAndGlyphs">-200</text>
<text x="201.54999999999998" y="29" font-size="11" fill="#0a0a20" text-anchor="middle" textLength="20.6" lengthAdjust="spacingAndGlyphs">-100</text>
<text x="201.54999999999998" y="864.5" font-size="11" fill="#0a0a20" text-anchor="middle" textLength="20.6" lengthAdjust="spacingAndGlyphs">-100</text>
<text x="370.4" y="29" font-size="11" fill="#0a0a20" text-anchor="middle">0</text>
<text x="370.4" y="864.5" font-size="11" fill="#0a0a20" text-anchor="middle">0</text>
<text x="541.75" y="29" font-size="11" fill="#0a0a20" text-anchor="middle" textLength="16.8" lengthAdjust="spacingAndGlyphs">100</text>
<text x="541.75" y="864.5" font-size="11" fill="#0a0a20" text-anchor="middle" textLength="16.8" lengthAdjust="spacingAndGlyphs">100</text>
<text x="713.0999999999999" y="29" font-size="11" fill="#0a0a20" text-anchor="middle" textLength="16.8" lengthAdjust="spacingAndGlyphs">200</text>
<text x="713.0999999999999" y="864.5" font-size="11" fill="#0a0a20" text-anchor="middle" textLength="16.8" lengthAdjust="spacingAndGlyphs">200</text>
<text x="884.4499999999999" y="29" font-size="11" fill="#0a0a20" text-anchor="middle" textLength="16.8" lengthAdjust="spacingAndGlyphs">300</text>
<text x="884.4499999999999" y="864.5" font-size="11" fill="#0a0a20" text-anchor="middle" textLength="16.8" lengthAdjust="spacingAndGlyphs">300</text>
</g>
<text font-size="11" text-anchor="middle" textLength="20.6" lengthAdjust="spacingAndGlyphs" transform="translate(12 780.8) rotate(-90)">-200</text>
<text font-size="11" text-anchor="middle" textLength="20.6" lengthAdjust="spacingAndGlyphs" transform="translate(1050 782.3) rotate(90)">-200</text>
<text font-size="11" text-anchor="middle" textLength="20.6" lengthAdjust="spacingAndGlyphs" transform="translate(12 609.5) rotate(-90)">-100</text>
<text font-size="11" text-anchor="middle" textLength="20.6" lengthAdjust="spacingAndGlyphs" transform="translate(1050 611.0) rotate(90)">-100</text>
<text font-size="11" text-anchor="middle" transform="translate(12 438.6) rotate(-90)">0</text>
<text font-size="11" text-anchor="middle" transform="translate(1050 438.6) rotate(90)">0</text>
<text font-size="11" text-anchor="middle" textLength="16.8" lengthAdjust="spacingAndGlyphs" transform="translate(12 267.2) rotate(-90)">100</text>
<text font-size="11" text-anchor="middle" textLength="16.8" lengthAdjust="spacingAndGlyphs" transform="translate(1050 267.2) rotate(90)">100</text>
<text font-size="11" text-anchor="middle" textLength="16.8" lengthAdjust="spacingAndGlyphs" transform="translate(12 95.9) rotate(-90)">200</text>
<text font-size="11" text-anchor="middle" textLength="16.8" lengthAdjust="spacingAndGlyphs" transform="translate(1050 95.9) rotate(90)">200</text>
</g>
<rect x="0" y="866" width="1060" height="25" fill="#f0f0f0"/>
<g fill="none" stroke="#000" stroke-width="1.1"><path d="M6.5 872V880.5H16"/></g>
<path d="M6.5 869.8L3.8 873.2H9.2Z M18.3 880.5L15 877.8V883.2Z" fill="#000"/>
<path d="M9 874L12.5 878L17.3 873.5" fill="none" stroke="#a01818" stroke-width="1.1"/>
<path d="M8 873L11 873.6L8.8 876Z M18.3 872.6L15.2 873.2L17.6 875.8Z" fill="#a01818"/>
<rect x="21.5" y="867.5" width="190" height="19" fill="#fff" stroke="#7a7a7a" stroke-width="1"/>
<text x="24" y="881" font-size="11" fill="#111" textLength="144" lengthAdjust="spacingAndGlyphs">Система координат проекта</text>
<path d="M197.5 875.5L201.5 879.5L205.5 875.5" fill="none" stroke="#444" stroke-width="1.1"/>
<rect x="216" y="868" width="1" height="18.5" fill="#a0a0a0"/>
<g><circle cx="232.2" cy="873.6" r="5.2" fill="#f6f8fa" stroke="#a4a4a4" stroke-width="1.3"/><path d="M228.6 877.8L223.3 883.3" stroke="#787878" stroke-width="2.2" stroke-linecap="round"/></g>
<text x="241.8" y="881" font-size="11" fill="#111" textLength="52.5" lengthAdjust="spacingAndGlyphs">М (1:2000)</text>
<rect x="0" y="891" width="1060" height="22" fill="#fff"/>
<rect x="0" y="913" width="1060" height="1.2" fill="#111"/>
<rect x="0" y="914.2" width="1060" height="3" fill="#c0c0c0"/>
<rect x="6.5" y="893.5" width="226" height="22" fill="#f0f0f0"/>
<path d="M6.5 914V893.5H232.5V914" fill="none" stroke="#000" stroke-width="1.1"/>
<g><rect x="13.6" y="899.8" width="3.6" height="5.6" rx="1.2" fill="#fff" stroke="#0808e0" stroke-width="1.5"/><circle cx="20" cy="905" r="2.3" fill="#f01010"/><path d="M18.4 902.6L20.7 899L23 902.6Z" fill="#f0d800" stroke="#b08000" stroke-width="0.4"/></g>
<text x="31.8" y="909" font-size="11" fill="#111" textLength="196" lengthAdjust="spacingAndGlyphs">Атрибутивные данные текущего слоя</text>
<g fill="none" stroke-linecap="round"><path d="M238.4 907.2Q240 899.5 248 897.6" stroke="#2e4490" stroke-width="1.5"/><path d="M241.7 907.8Q243 902.5 248.5 900.8" stroke="#48b848" stroke-width="1.6"/><path d="M245.2 908.2Q246.2 905.2 249.5 904" stroke="#f01818" stroke-width="1.7"/></g>
<text x="257.5" y="909" font-size="11" fill="#111" textLength="105" lengthAdjust="spacingAndGlyphs">Результаты расчета</text>
<rect x="1064" y="0" width="402" height="15.5" fill="#99b4d1"/>
<text x="1067" y="11" font-size="11" fill="#111" textLength="105" lengthAdjust="spacingAndGlyphs">Результаты расчета</text>
<g stroke="#111" fill="none"><path d="M1453.5 2.5H1457.7V8.5H1453.5Z" stroke-width="1"/><path d="M1457.2 2.5V8.5" stroke-width="1.8"/><path d="M1451.7 8.5H1459.5" stroke-width="1.1"/><path d="M1455.5 8.5V11.2" stroke-width="1.1"/></g>
<rect x="1067.5" y="29.5" width="395" height="61" fill="none" stroke="#dadada" stroke-width="1"/>
<rect x="1075" y="24" width="118" height="11" fill="#f0f0f0"/>
<text x="1078" y="33.5" font-size="11" font-weight="bold" stroke="#111" stroke-width="0.3" fill="#111" textLength="112" lengthAdjust="spacingAndGlyphs">Изолинии и флажки</text>
<text x="1073.3" y="55" font-size="11" fill="#111" textLength="53" lengthAdjust="spacingAndGlyphs">Параметр:</text>
<rect x="1141.5" y="42" width="310" height="19" fill="#e1e1e1" stroke="#adadad" stroke-width="1"/>
<g clip-path="url(#cc)">
<text x="1144.8" y="55.5" font-size="11" font-weight="bold" stroke="#111" stroke-width="0.3" fill="#111" textLength="292.5" lengthAdjust="spacingAndGlyphs">Концентрация вредного вещества (в долях ПДК)</text>
</g>
<path d="M1439.5 49.5L1443.5 53.5L1447.5 49.5" fill="none" stroke="#444" stroke-width="1.1"/>
<text x="1073.3" y="79" font-size="11" fill="#111" textLength="54" lengthAdjust="spacingAndGlyphs">Высота, м:</text>
<rect x="1141.5" y="65.5" width="84.5" height="20" fill="#fff" stroke="#333" stroke-width="1"/>
<text x="1144.8" y="79.5" font-size="11" font-weight="bold" stroke="#111" stroke-width="0.3" fill="#111">2</text>
<path d="M1213.5 73.5L1217.5 77.5L1221.5 73.5" fill="none" stroke="#444" stroke-width="1.1"/>
<text x="1078" y="111" font-size="11" font-weight="bold" stroke="#111" stroke-width="0.3" fill="#111" textLength="163.3" lengthAdjust="spacingAndGlyphs">Вариант, тип и код расчета:</text>
<g><path d="M1375 107.8L1381.3 101.2L1383.3 103.2L1377 109.8Z" fill="#f0d820" stroke="#4a3a10" stroke-width="0.9"/><path d="M1380.6 101.9L1381.6 100.8L1383.8 103L1382.7 104Z" fill="#e02020" stroke="#601010" stroke-width="0.5"/><path d="M1374.2 110.4L1375 107.8L1377 109.8Z" fill="#222"/></g>
<text x="1388" y="109" font-size="11" fill="#111" textLength="65.5" lengthAdjust="spacingAndGlyphs">Настройка...</text>
<rect x="1067.5" y="118.5" width="395" height="800" fill="#fff" stroke="#6a6a6a" stroke-width="1"/>
<rect x="1445" y="119" width="17" height="798" fill="#f0f0f0"/>
<path d="M1449.5 129.5L1453.5 125.5L1457.5 129.5" fill="none" stroke="#b0b0b0" stroke-width="1.3"/>
<path d="M1449.5 906.5L1453.5 910.5L1457.5 906.5" fill="none" stroke="#b0b0b0" stroke-width="1.3"/>
<g clip-path="url(#tc)">
<rect x="1103" y="182.5" width="342" height="20.5" fill="#a3c8f0"/>
<rect x="1138.5" y="224" width="307" height="41.5" fill="#ffffe8"/>
<rect x="1073.5" y="124.5" width="8" height="8" fill="#fff" stroke="#8c8c8c" stroke-width="1"/>
<rect x="1075.0" y="128.0" width="5" height="1" fill="#000"/>
<rect x="1077.0" y="126.0" width="1" height="5" fill="#000"/>
<g><rect x="1089.8" y="124.3" width="6" height="10.4" fill="#cbc6c0"/><path d="M1100.8 124.5A5.4 5.4 0 0 0 1100.8 134.1" fill="none" stroke="#86ccf2" stroke-width="2.2"/><path d="M1101.2 126.5A3.4 3.4 0 0 0 1101.2 132.5" fill="none" stroke="#e8f5fc" stroke-width="1.6"/><circle cx="1094.1" cy="134.1" r="1.5" fill="#f2981c"/><path d="M1095.6 134.7H1100.3" stroke="#667" stroke-width="0.9"/></g>
<text x="1107.2" y="133.5" font-size="11" font-weight="bold" stroke="#000" stroke-width="0.3" fill="#000" textLength="315.9" lengthAdjust="spacingAndGlyphs" xml:space="preserve">Новое предприятие (3) - Средние (четыре источника)</text>
<text x="1426.4" y="133.5" font-size="11" font-weight="bold" stroke="#000" stroke-width="0.3" fill="#000" textLength="69" lengthAdjust="spacingAndGlyphs" xml:space="preserve">[11.09.2018</text>
<rect x="1073.5" y="145.5" width="8" height="8" fill="#fff" stroke="#8c8c8c" stroke-width="1"/>
<rect x="1075.0" y="149.0" width="5" height="1" fill="#000"/>
<rect x="1077.0" y="147.0" width="1" height="5" fill="#000"/>
<g><rect x="1089.8" y="145.3" width="6" height="10.4" fill="#cbc6c0"/><path d="M1100.8 145.5A5.4 5.4 0 0 0 1100.8 155.1" fill="none" stroke="#86ccf2" stroke-width="2.2"/><path d="M1101.2 147.5A3.4 3.4 0 0 0 1101.2 153.5" fill="none" stroke="#e8f5fc" stroke-width="1.6"/><circle cx="1094.1" cy="155.1" r="1.5" fill="#f2981c"/><path d="M1095.6 155.7H1100.3" stroke="#667" stroke-width="0.9"/></g>
<text x="1107.2" y="154.5" font-size="11" font-weight="bold" stroke="#000" stroke-width="0.3" fill="#000" textLength="293.0" lengthAdjust="spacingAndGlyphs" xml:space="preserve">Новое предприятие (3) - Средние (три источника)</text>
<text x="1403.5" y="154.5" font-size="11" font-weight="bold" stroke="#000" stroke-width="0.3" fill="#000" textLength="97.5" lengthAdjust="spacingAndGlyphs" xml:space="preserve">[11.09.2018 12:4</text>
<rect x="1073.5" y="166.5" width="8" height="8" fill="#fff" stroke="#8c8c8c" stroke-width="1"/>
<rect x="1075.0" y="170.0" width="5" height="1" fill="#000"/>
<rect x="1077.0" y="168.0" width="1" height="5" fill="#000"/>
<g><rect x="1089.8" y="166.3" width="6" height="10.4" fill="#cbc6c0"/><path d="M1100.8 166.5A5.4 5.4 0 0 0 1100.8 176.1" fill="none" stroke="#86ccf2" stroke-width="2.2"/><path d="M1101.2 168.5A3.4 3.4 0 0 0 1101.2 174.5" fill="none" stroke="#e8f5fc" stroke-width="1.6"/><circle cx="1094.1" cy="176.1" r="1.5" fill="#f2981c"/><path d="M1095.6 176.7H1100.3" stroke="#667" stroke-width="0.9"/></g>
<text x="1107.2" y="175.5" font-size="11" font-weight="bold" stroke="#000" stroke-width="0.3" fill="#000" textLength="293.9" lengthAdjust="spacingAndGlyphs" xml:space="preserve">Новое предприятие (3) - Средние (два источника)</text>
<text x="1404.5" y="175.5" font-size="11" font-weight="bold" stroke="#000" stroke-width="0.3" fill="#000" textLength="97.5" lengthAdjust="spacingAndGlyphs" xml:space="preserve">[11.09.2018 12:4</text>
<rect x="1073.5" y="187.5" width="8" height="8" fill="#fff" stroke="#8c8c8c" stroke-width="1"/>
<rect x="1075.0" y="191.0" width="5" height="1" fill="#000"/>
<g><rect x="1089.8" y="187.3" width="6" height="10.4" fill="#cbc6c0"/><path d="M1100.8 187.5A5.4 5.4 0 0 0 1100.8 197.1" fill="none" stroke="#86ccf2" stroke-width="2.2"/><path d="M1101.2 189.5A3.4 3.4 0 0 0 1101.2 195.5" fill="none" stroke="#e8f5fc" stroke-width="1.6"/><circle cx="1094.1" cy="197.1" r="1.5" fill="#f2981c"/><path d="M1095.6 197.7H1100.3" stroke="#667" stroke-width="0.9"/></g>
<text x="1107.2" y="196.5" font-size="11" font-weight="bold" stroke="#000" stroke-width="0.3" fill="#000" textLength="295.2" lengthAdjust="spacingAndGlyphs" xml:space="preserve">Новое предприятие (3) - Средние (один источник)</text>
<text x="1405.7" y="196.5" font-size="11" font-weight="bold" stroke="#000" stroke-width="0.3" fill="#000" textLength="97.5" lengthAdjust="spacingAndGlyphs" xml:space="preserve">[11.09.2018 12:4</text>
<rect x="1073.5" y="271.5" width="8" height="8" fill="#fff" stroke="#8c8c8c" stroke-width="1"/>
<rect x="1075.0" y="275.0" width="5" height="1" fill="#000"/>
<rect x="1077.0" y="273.0" width="1" height="5" fill="#000"/>
<g><rect x="1089.8" y="271.3" width="6" height="10.4" fill="#cbc6c0"/><path d="M1100.8 271.5A5.4 5.4 0 0 0 1100.8 281.1" fill="none" stroke="#86ccf2" stroke-width="2.2"/><path d="M1101.2 273.5A3.4 3.4 0 0 0 1101.2 279.5" fill="none" stroke="#e8f5fc" stroke-width="1.6"/><circle cx="1094.1" cy="281.1" r="1.5" fill="#f2981c"/><path d="M1095.6 281.7H1100.3" stroke="#667" stroke-width="0.9"/></g>
<text x="1107.2" y="280.5" font-size="11" font-weight="bold" stroke="#000" stroke-width="0.3" fill="#000" textLength="344.8" lengthAdjust="spacingAndGlyphs" xml:space="preserve">Новое предприятие (3) - Упрощенный (четыре источника)</text>
<text x="1455.4" y="280.5" font-size="11" font-weight="bold" stroke="#000" stroke-width="0.3" fill="#000" textLength="41" lengthAdjust="spacingAndGlyphs" xml:space="preserve">[11.09.</text>
<rect x="1073.5" y="292.5" width="8" height="8" fill="#fff" stroke="#8c8c8c" stroke-width="1"/>
<rect x="1075.0" y="296.0" width="5" height="1" fill="#000"/>
<rect x="1077.0" y="294.0" width="1" height="5" fill="#000"/>
<g><rect x="1089.8" y="292.3" width="6" height="10.4" fill="#cbc6c0"/><path d="M1100.8 292.5A5.4 5.4 0 0 0 1100.8 302.1" fill="none" stroke="#86ccf2" stroke-width="2.2"/><path d="M1101.2 294.5A3.4 3.4 0 0 0 1101.2 300.5" fill="none" stroke="#e8f5fc" stroke-width="1.6"/><circle cx="1094.1" cy="302.1" r="1.5" fill="#f2981c"/><path d="M1095.6 302.7H1100.3" stroke="#667" stroke-width="0.9"/></g>
<text x="1107.2" y="301.5" font-size="11" font-weight="bold" stroke="#000" stroke-width="0.3" fill="#000" textLength="321.7" lengthAdjust="spacingAndGlyphs" xml:space="preserve">Новое предприятие (3) - Упрощенный (три источника)</text>
<text x="1432.3" y="301.5" font-size="11" font-weight="bold" stroke="#000" stroke-width="0.3" fill="#000" textLength="69" lengthAdjust="spacingAndGlyphs" xml:space="preserve">[11.09.2018</text>
<rect x="1073.5" y="313.5" width="8" height="8" fill="#fff" stroke="#8c8c8c" stroke-width="1"/>
<rect x="1075.0" y="317.0" width="5" height="1" fill="#000"/>
<rect x="1077.0" y="315.0" width="1" height="5" fill="#000"/>
<g><rect x="1089.8" y="313.3" width="6" height="10.4" fill="#cbc6c0"/><path d="M1100.8 313.5A5.4 5.4 0 0 0 1100.8 323.1" fill="none" stroke="#86ccf2" stroke-width="2.2"/><path d="M1101.2 315.5A3.4 3.4 0 0 0 1101.2 321.5" fill="none" stroke="#e8f5fc" stroke-width="1.6"/><circle cx="1094.1" cy="323.1" r="1.5" fill="#f2981c"/><path d="M1095.6 323.7H1100.3" stroke="#667" stroke-width="0.9"/></g>
<text x="1107.2" y="322.5" font-size="11" font-weight="bold" stroke="#000" stroke-width="0.3" fill="#000" textLength="322.7" lengthAdjust="spacingAndGlyphs" xml:space="preserve">Новое предприятие (3) - Упрощенный (два источника)</text>
<text x="1433.2" y="322.5" font-size="11" font-weight="bold" stroke="#000" stroke-width="0.3" fill="#000" textLength="69" lengthAdjust="spacingAndGlyphs" xml:space="preserve">[11.09.2018</text>
<rect x="1073.5" y="334.5" width="8" height="8" fill="#fff" stroke="#8c8c8c" stroke-width="1"/>
<rect x="1075.0" y="338.0" width="5" height="1" fill="#000"/>
<rect x="1077.0" y="336.0" width="1" height="5" fill="#000"/>
<g><rect x="1089.8" y="334.3" width="6" height="10.4" fill="#cbc6c0"/><path d="M1100.8 334.5A5.4 5.4 0 0 0 1100.8 344.1" fill="none" stroke="#86ccf2" stroke-width="2.2"/><path d="M1101.2 336.5A3.4 3.4 0 0 0 1101.2 342.5" fill="none" stroke="#e8f5fc" stroke-width="1.6"/><circle cx="1094.1" cy="344.1" r="1.5" fill="#f2981c"/><path d="M1095.6 344.7H1100.3" stroke="#667" stroke-width="0.9"/></g>
<text x="1107.2" y="343.5" font-size="11" font-weight="bold" stroke="#000" stroke-width="0.3" fill="#000" textLength="323.9" lengthAdjust="spacingAndGlyphs" xml:space="preserve">Новое предприятие (3) - Упрощенный (один источник)</text>
<text x="1434.5" y="343.5" font-size="11" font-weight="bold" stroke="#000" stroke-width="0.3" fill="#000" textLength="69" lengthAdjust="spacingAndGlyphs" xml:space="preserve">[11.09.2018</text>
<rect x="1073.5" y="355.5" width="8" height="8" fill="#fff" stroke="#8c8c8c" stroke-width="1"/>
<rect x="1075.0" y="359.0" width="5" height="1" fill="#000"/>
<rect x="1077.0" y="357.0" width="1" height="5" fill="#000"/>
<g><rect x="1089.8" y="355.3" width="6" height="10.4" fill="#cbc6c0"/><path d="M1100.8 355.5A5.4 5.4 0 0 0 1100.8 365.1" fill="none" stroke="#86ccf2" stroke-width="2.2"/><path d="M1101.2 357.5A3.4 3.4 0 0 0 1101.2 363.5" fill="none" stroke="#e8f5fc" stroke-width="1.6"/><circle cx="1094.1" cy="365.1" r="1.5" fill="#f2981c"/><path d="M1095.6 365.7H1100.3" stroke="#667" stroke-width="0.9"/></g>
<text x="1107.2" y="364.5" font-size="11" font-weight="bold" stroke="#000" stroke-width="0.3" fill="#000" textLength="323.9" lengthAdjust="spacingAndGlyphs" xml:space="preserve">Новое предприятие (3) - МРР-2017 (четыре источника)</text>
<text x="1434.5" y="364.5" font-size="11" font-weight="bold" stroke="#000" stroke-width="0.3" fill="#000" textLength="69" lengthAdjust="spacingAndGlyphs" xml:space="preserve">[11.09.2018</text>
<rect x="1073.5" y="376.5" width="8" height="8" fill="#fff" stroke="#8c8c8c" stroke-width="1"/>
<rect x="1075.0" y="380.0" width="5" height="1" fill="#000"/>
<rect x="1077.0" y="378.0" width="1" height="5" fill="#000"/>
<g><rect x="1089.8" y="376.3" width="6" height="10.4" fill="#cbc6c0"/><path d="M1100.8 376.5A5.4 5.4 0 0 0 1100.8 386.1" fill="none" stroke="#86ccf2" stroke-width="2.2"/><path d="M1101.2 378.5A3.4 3.4 0 0 0 1101.2 384.5" fill="none" stroke="#e8f5fc" stroke-width="1.6"/><circle cx="1094.1" cy="386.1" r="1.5" fill="#f2981c"/><path d="M1095.6 386.7H1100.3" stroke="#667" stroke-width="0.9"/></g>
<text x="1107.2" y="385.5" font-size="11" font-weight="bold" stroke="#000" stroke-width="0.3" fill="#000" textLength="300.8" lengthAdjust="spacingAndGlyphs" xml:space="preserve">Новое предприятие (3) - МРР-2017 (три источника)</text>
<text x="1411.4" y="385.5" font-size="11" font-weight="bold" stroke="#000" stroke-width="0.3" fill="#000" textLength="86.5" lengthAdjust="spacingAndGlyphs" xml:space="preserve">[11.09.2018 12</text>
<rect x="1073.5" y="397.5" width="8" height="8" fill="#fff" stroke="#8c8c8c" stroke-width="1"/>
<rect x="1075.0" y="401.0" width="5" height="1" fill="#000"/>
<rect x="1077.0" y="399.0" width="1" height="5" fill="#000"/>
<g><rect x="1089.8" y="397.3" width="6" height="10.4" fill="#cbc6c0"/><path d="M1100.8 397.5A5.4 5.4 0 0 0 1100.8 407.1" fill="none" stroke="#86ccf2" stroke-width="2.2"/><path d="M1101.2 399.5A3.4 3.4 0 0 0 1101.2 405.5" fill="none" stroke="#e8f5fc" stroke-width="1.6"/><circle cx="1094.1" cy="407.1" r="1.5" fill="#f2981c"/><path d="M1095.6 407.7H1100.3" stroke="#667" stroke-width="0.9"/></g>
<text x="1107.2" y="406.5" font-size="11" font-weight="bold" stroke="#000" stroke-width="0.3" fill="#000" textLength="305.1" lengthAdjust="spacingAndGlyphs" xml:space="preserve">Новое предприятие (3) -  МРР-2017 (два источника)</text>
<text x="1415.7" y="406.5" font-size="11" font-weight="bold" stroke="#000" stroke-width="0.3" fill="#000" textLength="79.5" lengthAdjust="spacingAndGlyphs" xml:space="preserve">[11.09.2018 1</text>
<rect x="1073.5" y="418.5" width="8" height="8" fill="#fff" stroke="#8c8c8c" stroke-width="1"/>
<rect x="1075.0" y="422.0" width="5" height="1" fill="#000"/>
<rect x="1077.0" y="420.0" width="1" height="5" fill="#000"/>
<g><rect x="1089.8" y="418.3" width="6" height="10.4" fill="#cbc6c0"/><path d="M1100.8 418.5A5.4 5.4 0 0 0 1100.8 428.1" fill="none" stroke="#86ccf2" stroke-width="2.2"/><path d="M1101.2 420.5A3.4 3.4 0 0 0 1101.2 426.5" fill="none" stroke="#e8f5fc" stroke-width="1.6"/><circle cx="1094.1" cy="428.1" r="1.5" fill="#f2981c"/><path d="M1095.6 428.7H1100.3" stroke="#667" stroke-width="0.9"/></g>
<text x="1107.2" y="427.5" font-size="11" font-weight="bold" stroke="#000" stroke-width="0.3" fill="#000" textLength="303.0" lengthAdjust="spacingAndGlyphs" xml:space="preserve">Новое предприятие (3) - МРР-2017 (один источник)</text>
<text x="1413.6" y="427.5" font-size="11" font-weight="bold" stroke="#000" stroke-width="0.3" fill="#000" textLength="86.5" lengthAdjust="spacingAndGlyphs" xml:space="preserve">[11.09.2018 12</text>
<rect x="1091.5" y="208.5" width="8" height="8" fill="#fff" stroke="#8c8c8c" stroke-width="1"/>
<rect x="1093.0" y="212.0" width="5" height="1" fill="#000"/>
<g stroke="#1a3be0" stroke-width="1.2"><path d="M1108.6 208.8h4l1 1.5h3.5v6h-8.5z" fill="#9fc0f0"/><path d="M1110.6 211.8h3.5l1 1.3h3.5v5.4h-8z" fill="#b8d4f8"/></g>
<text x="1124.8" y="217.5" font-size="11" fill="#b0b0b0" textLength="146.5" lengthAdjust="spacingAndGlyphs">Концентрации по веществам</text>
<g fill="none" stroke-linecap="round"><path d="M1125.9 238.2Q1127.5 230.5 1135.5 228.6" stroke="#2e4490" stroke-width="1.5"/><path d="M1129.2 238.8Q1130.5 233.5 1136.0 231.8" stroke="#48b848" stroke-width="1.6"/><path d="M1132.7 239.2Q1133.7 236.2 1137.0 235" stroke="#f01818" stroke-width="1.7"/></g>
<text x="1144" y="238.5" font-size="11" font-weight="bold" stroke="#6a6a6a" stroke-width="0.3" fill="#6a6a6a" textLength="330.0" lengthAdjust="spacingAndGlyphs">1017 (2-Метилбут-3-ен-2-ол (Диметилвинилкарбинол))</text>
<g fill="none" stroke-linecap="round"><path d="M1125.9 259.2Q1127.5 251.5 1135.5 249.6" stroke="#2e4490" stroke-width="1.5"/><path d="M1129.2 259.8Q1130.5 254.5 1136.0 252.8" stroke="#48b848" stroke-width="1.6"/><path d="M1132.7 260.2Q1133.7 257.2 1137.0 256" stroke="#f01818" stroke-width="1.7"/></g>
<text x="1142.8" y="259.5" font-size="11" fill="#6a6a6a" textLength="215" lengthAdjust="spacingAndGlyphs">Все вещества (Объединённый результат)</text>
</g>
</svg></body></html>
